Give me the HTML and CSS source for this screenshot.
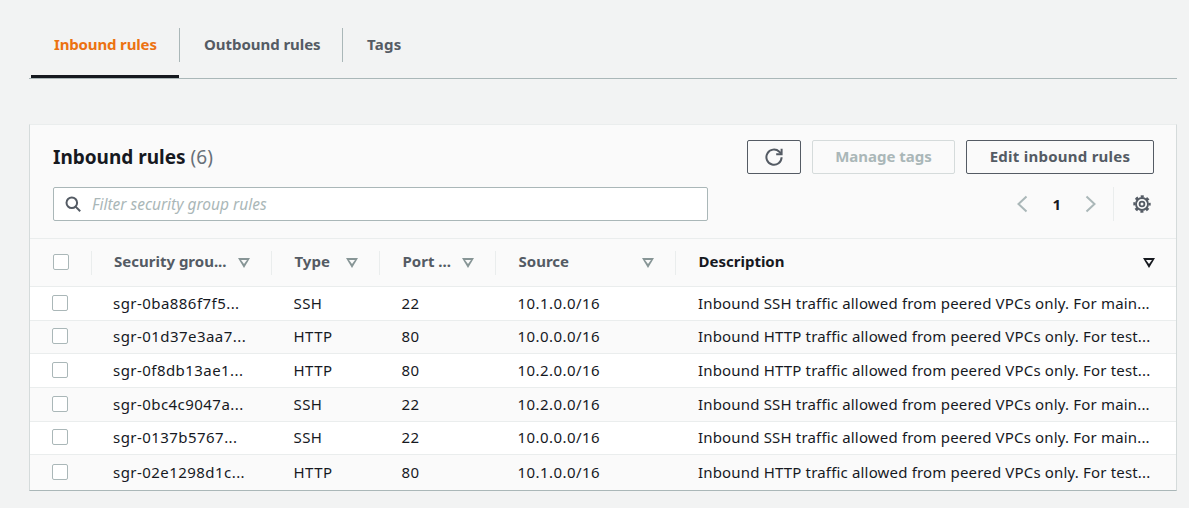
FILE: index.html
```html
<!DOCTYPE html>
<html lang="en">
<head>
  <meta charset="utf-8">
  <title>Inbound rules</title>
  <link rel="stylesheet" href="styles.css">
</head>
<body>
  <nav class="tabs">
    <a class="tab tab-active">Inbound rules</a>
    <a class="tab tab-out">Outbound rules</a>
    <a class="tab tab-last">Tags</a>
  </nav>

  <section class="panel">
    <div class="panel-head">
      <div class="head-top">
        <h2 class="title">Inbound rules <span class="count">(6)</span></h2>
        <div class="actions">
          <button class="btn btn-icon" aria-label="Refresh">
            <svg width="18" height="18" viewBox="0 0 18 18" fill="none" stroke="#545b64" stroke-width="2">
              <path d="M16.6 9.2a7.6 7.6 0 1 1-2.3-5.5l2 1.9"/>
              <path d="M16.6 .8v5.4h-5.4"/>
            </svg>
          </button>
          <button class="btn btn-manage" disabled>Manage tags</button>
          <button class="btn btn-edit">Edit inbound rules</button>
        </div>
      </div>
      <div class="head-bottom">
        <label class="filter">
          <svg width="16" height="16" viewBox="0 0 16 16" fill="none" stroke="#545b64" stroke-width="2">
            <circle cx="6.8" cy="6.8" r="5.3"/>
            <path d="M10.6 10.6l4.6 4.6"/>
          </svg>
          <input type="text" placeholder="Filter security group rules">
        </label>
        <div class="pager">
          <svg width="12" height="18" viewBox="0 0 12 18" fill="none" stroke="#aab7b8" stroke-width="2"><path d="M10.5 1.5L2.5 9l8 7.5"/></svg>
          <span class="page-num">1</span>
          <svg width="12" height="18" viewBox="0 0 12 18" fill="none" stroke="#aab7b8" stroke-width="2"><path d="M1.5 1.5l8 7.5-8 7.5"/></svg>
        </div>
        <div class="settings">
          <svg width="18" height="18" viewBox="0 0 18 18" fill="none" stroke="#545b64">
            <circle cx="9" cy="9" r="2.4" stroke-width="1.8"/>
            <circle cx="9" cy="9" r="6" stroke-width="1.9"/>
            <circle cx="9" cy="9" r="7.6" stroke-width="2.2" stroke-dasharray="3.1 2.87" stroke-dashoffset="1.55"/>
          </svg>
        </div>
      </div>
    </div>

    <div class="row row-head">
      <div class="cell cell-check"><span class="check"></span></div>
      <div class="cell cell-th"><span class="th-label">Security grou...</span><span class="sort"></span></div>
      <div class="cell cell-th"><span class="th-label">Type</span><span class="sort"></span></div>
      <div class="cell cell-th"><span class="th-label">Port ...</span><span class="sort"></span></div>
      <div class="cell cell-th"><span class="th-label">Source</span><span class="sort"></span></div>
      <div class="cell cell-th sorted"><span class="th-label">Description</span><span class="sort"></span></div>
    </div>

    <div class="row">
      <div class="cell cell-check"><span class="check"></span></div>
      <div class="cell">sgr-0ba886f7f5...</div>
      <div class="cell">SSH</div>
      <div class="cell">22</div>
      <div class="cell">10.1.0.0/16</div>
      <div class="cell cell-desc">Inbound SSH traffic allowed from peered VPCs only. For main...</div>
    </div>
    <div class="row">
      <div class="cell cell-check"><span class="check"></span></div>
      <div class="cell">sgr-01d37e3aa7...</div>
      <div class="cell">HTTP</div>
      <div class="cell">80</div>
      <div class="cell">10.0.0.0/16</div>
      <div class="cell cell-desc">Inbound HTTP traffic allowed from peered VPCs only. For test...</div>
    </div>
    <div class="row">
      <div class="cell cell-check"><span class="check"></span></div>
      <div class="cell">sgr-0f8db13ae1...</div>
      <div class="cell">HTTP</div>
      <div class="cell">80</div>
      <div class="cell">10.2.0.0/16</div>
      <div class="cell cell-desc">Inbound HTTP traffic allowed from peered VPCs only. For test...</div>
    </div>
    <div class="row">
      <div class="cell cell-check"><span class="check"></span></div>
      <div class="cell">sgr-0bc4c9047a...</div>
      <div class="cell">SSH</div>
      <div class="cell">22</div>
      <div class="cell">10.2.0.0/16</div>
      <div class="cell cell-desc">Inbound SSH traffic allowed from peered VPCs only. For main...</div>
    </div>
    <div class="row">
      <div class="cell cell-check"><span class="check"></span></div>
      <div class="cell">sgr-0137b5767...</div>
      <div class="cell">SSH</div>
      <div class="cell">22</div>
      <div class="cell">10.0.0.0/16</div>
      <div class="cell cell-desc">Inbound SSH traffic allowed from peered VPCs only. For main...</div>
    </div>
    <div class="row row-last">
      <div class="cell cell-check"><span class="check"></span></div>
      <div class="cell">sgr-02e1298d1c...</div>
      <div class="cell">HTTP</div>
      <div class="cell">80</div>
      <div class="cell">10.1.0.0/16</div>
      <div class="cell cell-desc">Inbound HTTP traffic allowed from peered VPCs only. For test...</div>
    </div>
  </section>
</body>
</html>
```

FILE: styles.css
```css
* {
  box-sizing: border-box;
}

html, body {
  height: 100%;
}

body {
  margin: 0;
  padding: 28px 12px 0 29px;
  background: #f2f3f3;
  color: #16191f;
  font-family: "Noto Sans", sans-serif;
  font-size: 15px;
  overflow: hidden;
}

/* tabs */
.tabs {
  display: flex;
  height: 51px;
  border-bottom: 1px solid #aab7b8;
  margin-bottom: 45px;
}

.tab {
  position: relative;
  height: 50px;
  padding: 6px 0 0 24px;
  font-weight: 700;
  line-height: 20px;
  color: #545b64;
}

.tab::after {
  content: "";
  position: absolute;
  right: 0;
  top: 0;
  width: 1px;
  height: 34px;
  background: #aab7b8;
}

.tab-active {
  width: 149px;
  margin-left: 2px;
  padding-left: 23px;
  letter-spacing: -0.15px;
  color: #ec7211;
}

.tab-active::before {
  content: "";
  position: absolute;
  left: 0;
  right: 1px;
  bottom: 0;
  height: 3px;
  background: #16191f;
}

.tab-out {
  width: 163px;
  letter-spacing: -0.05px;
}

.tab-last {
  letter-spacing: 0.3px;
}

.tab-last::after {
  display: none;
}

/* panel */
.panel {
  background: #fafafa;
  border: 1px solid #eaeded;
  border-left-color: #d5dbdb;
  border-right-color: #d5dbdb;
  border-bottom-color: #aab7b8;
  height: 367px;
}

.panel-head {
  height: 114px;
  padding: 15px 22px 0 23px;
  background: #fafafa;
  border-bottom: 1px solid #eaeded;
}

.head-top {
  display: flex;
  justify-content: space-between;
  height: 34px;
}

.title {
  margin: 0;
  font-size: 19px;
  font-weight: 700;
  line-height: 34px;
}

.count {
  font-weight: 400;
  color: #687078;
}

.actions {
  display: flex;
  gap: 11px;
}

.btn {
  height: 34px;
  padding: 0 0 3px;
  background: transparent;
  border: 1px solid #545b64;
  border-radius: 2px;
  color: #545b64;
  font-family: inherit;
  font-size: 15px;
  font-weight: 700;
}

.btn-icon {
  width: 54px;
  padding: 0;
  display: flex;
  align-items: center;
  justify-content: center;
}

.btn-manage {
  width: 143px;
  border-color: #d5dbdb;
  color: #aab7b8;
}

.btn-edit {
  width: 188px;
  letter-spacing: 0.25px;
}

.head-bottom {
  display: flex;
  align-items: center;
  margin-top: 13px;
  height: 34px;
}

.filter {
  display: flex;
  align-items: center;
  gap: 11px;
  width: 655px;
  height: 34px;
  padding-left: 11px;
  background: #fff;
  border: 1px solid #aab7b8;
  border-radius: 2px;
}

.filter input {
  flex: 1;
  border: 0;
  outline: 0;
  padding: 0;
  background: transparent;
  color: #16191f;
  font-family: inherit;
  font-size: 15.5px;
}

.filter input::placeholder {
  color: #aab7b8;
  font-style: italic;
  opacity: 1;
}

.pager {
  display: flex;
  align-items: center;
  margin-left: auto;
  gap: 24px;
}

.page-num {
  font-weight: 700;
}

.settings {
  display: flex;
  align-items: center;
  height: 34px;
  margin-left: 16px;
  padding: 0 3px 0 19px;
  border-left: 1px solid #eaeded;
}

/* table */
.row {
  display: grid;
  grid-template-columns: 62px 179px 108px 116px 180px 1fr;
  height: 33.67px;
  border-bottom: 1px solid #eaeded;
  background: #fff;
}

.row:nth-child(even) {
  background: #fafafa;
}

.row-last {
  border-bottom: 0;
}

.cell {
  display: flex;
  align-items: center;
  padding: 0 0 1px 22.5px;
  line-height: 20px;
  white-space: nowrap;
  letter-spacing: 0.45px;
  color: #16191f;
}

.cell:nth-child(2) {
  padding-left: 21px;
}

.cell-desc {
  padding-left: 23px;
  letter-spacing: 0.17px;
}

.cell-check {
  padding-left: 22px;
}

.check {
  width: 16px;
  height: 16px;
  background: #fff;
  border: 1px solid #aab7b8;
  border-radius: 2px;
}

.row-head {
  height: 48px;
  background: #fafafa;
}

.row-head .cell-check {
  position: relative;
  padding-left: 23px;
}

.cell-th,
.cell-th:nth-child(n+3) {
  position: relative;
  justify-content: space-between;
  padding: 0 21px 3px 23.5px;
  font-weight: 700;
  letter-spacing: 0;
  color: #545b64;
}

.row-head .cell-th:nth-child(2) {
  padding-left: 22px;
}

.cell-th::before,
.row-head .cell-check::after {
  content: "";
  position: absolute;
  left: 0;
  top: 12px;
  height: 24px;
  border-left: 1px solid #eaeded;
}

.row-head .cell-check::after {
  left: auto;
  right: 0;
}

.cell-th:nth-child(2)::before {
  display: none;
}

/* sort caret: solid triangle with a small hole */
.sort {
  width: 0;
  height: 0;
  margin-top: 4px;
  border: 6px solid transparent;
  border-top: 10px solid #879596;
  border-bottom: 0;
  position: relative;
}

.sort::after {
  content: "";
  position: absolute;
  left: -3px;
  top: -8px;
  border: 3px solid transparent;
  border-top: 4px solid #fafafa;
  border-bottom: 0;
}

.sorted .th-label {
  color: #16191f;
}

.sorted .sort {
  border-top-color: #16191f;
}
```
